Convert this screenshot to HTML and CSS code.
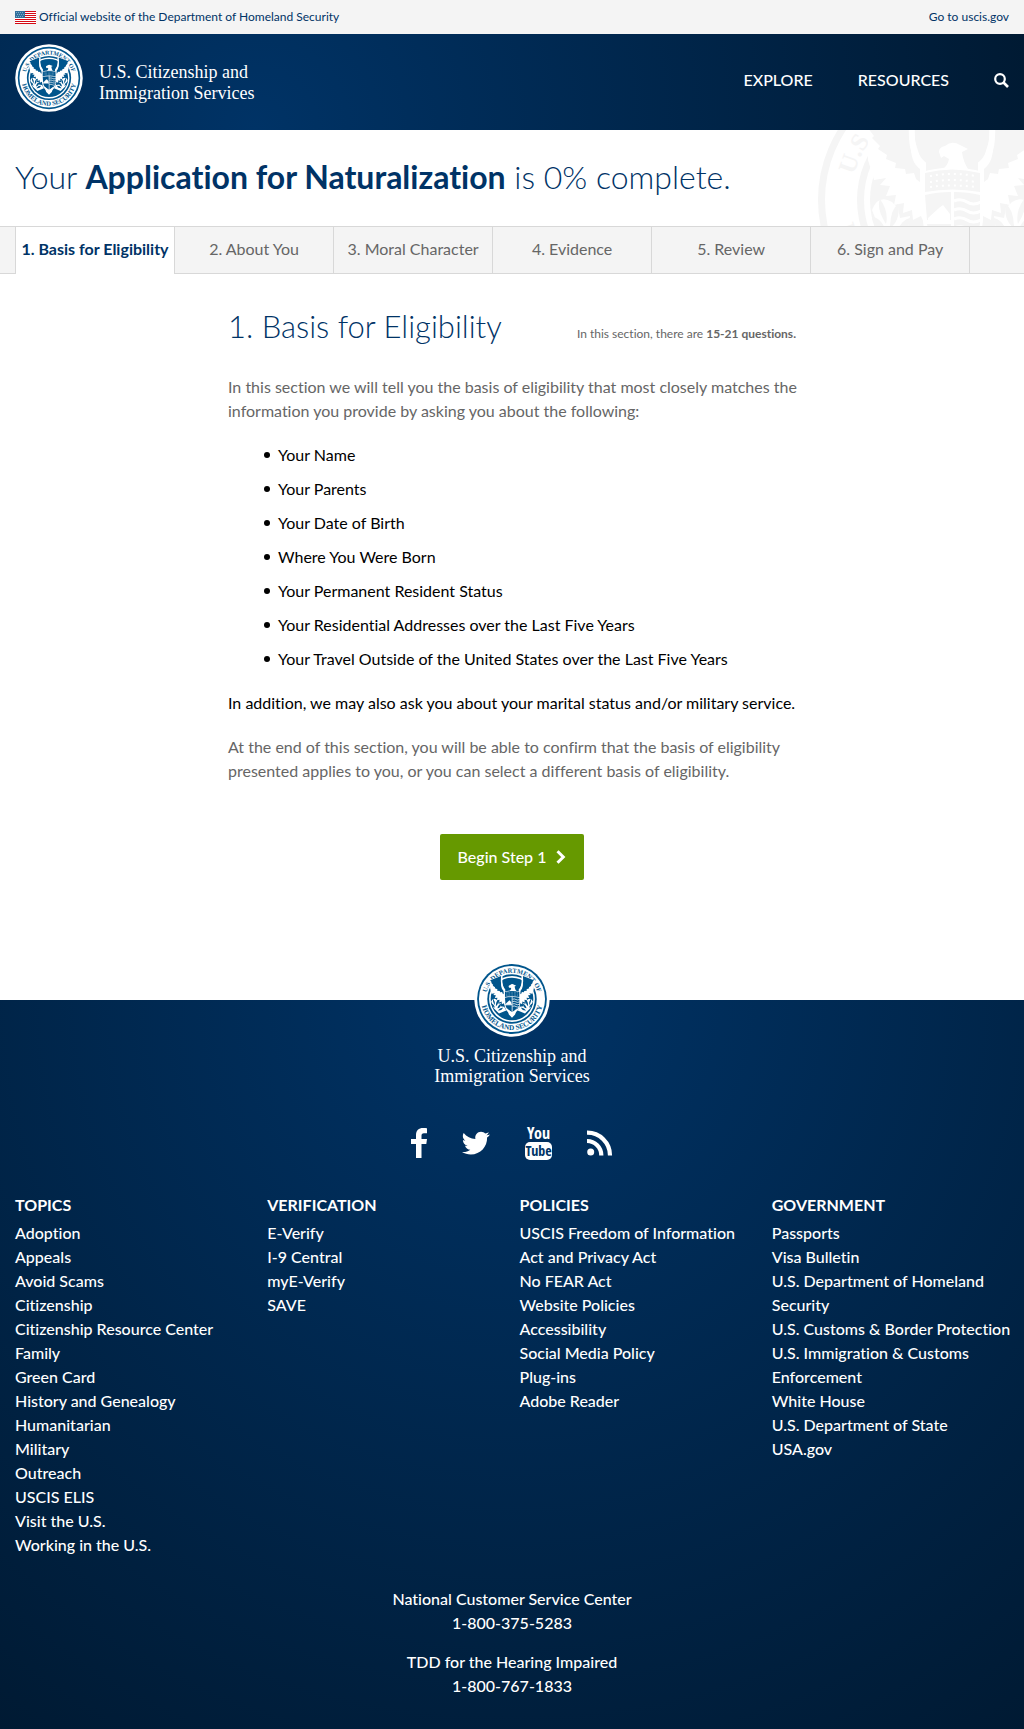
FILE: index.html
```html
<!DOCTYPE html>
<html lang="en">
<head>
<meta charset="utf-8">
<meta name="viewport" content="width=device-width, initial-scale=1">
<title>Application for Naturalization | USCIS</title>
<link rel="stylesheet" href="styles.css">
</head>
<body>
<svg class="sprite" aria-hidden="true">
  <symbol id="seal" viewBox="-146 -146 292 292">
    <circle r="145" class="paper"/>
    <circle r="134" class="ink"/>
    <circle r="127" class="paper"/>
    <path id="arc-top" d="M-101 0A101 101 0 0 1 101 0" fill="none"/>
    <path id="arc-bottom" d="M-119 0A119 119 0 0 0 119 0" fill="none"/>
    <text class="ink seal-text"><textPath href="#arc-top" startOffset="50%">U.S. DEPARTMENT OF</textPath></text>
    <text class="ink seal-text seal-text-low"><textPath href="#arc-bottom" startOffset="50%">HOMELAND SECURITY</textPath></text>
    <circle r="95" class="ink"/>
    <circle r="88" class="paper"/>
    <circle r="82" class="ink"/>
    <g id="wing">
      <path class="paper" d="M-28 -30L-46 -88L-84 -74L-84 -40L-78 -20L-66 -22L-72 -15L-62 -14L-66 -4L-56 -5L-58 5L-48 3L-49 13L-40 10L-39 20L-31 16L-26 28L-20 10Z"/>
      <path class="ink" d="M-42 -88L-84 -72L-78 -64L-80 -62L-72 -54L-74 -51L-65 -45L-66 -41L-56 -37L-57 -32L-47 -31L-46 -26L-38 -27L-36 -21L-32 -18L-32 -31C-44 -40 -41 -56 -42 -88Z"/>
      <path fill="none" class="paper-line" stroke-width="6" d="M-39 -88C-42 -60 -40 -45 -29 -36L-29 -28"/>
      <path class="paper" d="M-80 10Q-74 -6 -60 2L-54 8L-52 18L-42 16L-44 28L-30 30L-22 44L-50 56L-70 36Z"/>
      <path class="ink" d="M-66 24Q-76 8 -72 -1Q-63 12 -66 24ZM-62 28Q-62 10 -54 4Q-51 20 -62 28ZM-56 36Q-52 20 -42 18Q-43 34 -56 36ZM-66 34Q-80 26 -80 16Q-68 20 -66 34ZM-54 44Q-45 32 -34 34Q-40 46 -54 44Z"/>
    </g>
    <use href="#wing" transform="scale(-1 1)"/>
    <path class="paper" d="M-13 -48Q-13 -53 -7 -54Q0 -60 8 -55L16 -51L10 -48Q11 -39 16 -31L-9 -31Q-4 -35 -3 -41L-8 -44L-11 -42Z"/>
    <path class="paper" d="M-30 -28Q0 -37 31 -28L31 20Q29 48 0 59Q-28 48 -29 20Z"/>
    <path class="ink" d="M-27 -27Q0 -34 28 -27L28 -8Q0 -13 -27 -8Z"/>
    <path class="paper-line dots" fill="none" stroke-width="2" d="M-22 -24Q0 -28 24 -24M-22 -18Q0 -22 24 -18M-22 -13Q0 -16 24 -13"/>
    <path class="ink" d="M-27 -5Q-15 -8 -1 -8V20H-25Z"/>
    <path class="paper" d="M-24 18L-13 8L-9 5L-2 14V21H-24Z"/>
    <path class="ink" d="M2 -8Q16 -8 28 -5V24Q24 42 2 50ZM-25 24H-1V50Q-22 40 -25 24Z"/>
    <path class="paper-line" fill="none" stroke-width="3" d="M2 1Q9 -2 15 2T29 2M2 10Q9 7 15 11T29 11M2 19Q9 16 15 20T29 20M2 28Q9 25 15 29T28 29"/>
    <path class="paper" d="M-20 36L0 52L20 36L12 60L0 72L-12 60Z"/>
  </symbol>
</svg>

<div class="official">
  <div class="wrap official-row">
    <a class="official-link" href="#">
      <svg class="flag" viewBox="0 0 21 13" aria-hidden="true">
        <path fill="#fff" d="M0 0H21V13H0Z"/>
        <path fill="#d50a14" d="M0 0H21V1H0ZM0 2H21V3H0ZM0 4H21V5H0ZM0 6H21V7H0ZM0 8H21V9H0ZM0 10H21V11H0ZM0 12H21V13H0Z"/>
        <path fill="#31709c" d="M0 0H10V7H0Z"/>
        <path stroke="#7fa9c6" stroke-dasharray="1 1" d="M1 1.500H9M2 3.500H9M1 5.500H9"/>
      </svg>
      Official website of the Department of Homeland Security
    </a>
    <a href="#">Go to uscis.gov</a>
  </div>
</div>

<header class="masthead">
  <div class="wrap masthead-row">
    <a class="brand" href="#">
      <svg class="seal" aria-hidden="true"><use href="#seal"/></svg>
      <span>U.S. Citizenship and<br>Immigration Services</span>
    </a>
    <nav class="main-nav" aria-label="Main">
      <a href="#">EXPLORE</a>
      <a href="#">RESOURCES</a>
      <button class="search" type="button" aria-label="Search">
        <svg viewBox="0 0 15 15"><circle cx="6" cy="6" r="4.800" fill="none" stroke="currentColor" stroke-width="2.200"/><path d="M9.500 9.500L14 14" stroke="currentColor" stroke-width="2.600"/></svg>
      </button>
    </nav>
  </div>
</header>

<section class="progress">
  <svg class="watermark" aria-hidden="true"><use href="#seal"/></svg>
  <div class="wrap">
    <h1>Your <strong>Application for Naturalization</strong> is 0% complete.</h1>
  </div>
</section>

<nav class="steps" aria-label="Steps">
  <ol class="wrap">
    <li><a class="current" aria-current="step" href="#">1. Basis for Eligibility</a></li>
    <li><a href="#">2. About You</a></li>
    <li><a href="#">3. Moral Character</a></li>
    <li><a href="#">4. Evidence</a></li>
    <li><a href="#">5. Review</a></li>
    <li><a href="#">6. Sign and Pay</a></li>
  </ol>
</nav>

<main class="content">
  <div class="section-head">
    <h2>1. Basis for Eligibility</h2>
    <p>In this section, there are <strong>15-21 questions.</strong></p>
  </div>
  <p class="lead">In this section we will tell you the basis of eligibility that most closely matches the information you provide by asking you about the following:</p>
  <ul class="topics">
    <li>Your Name</li>
    <li>Your Parents</li>
    <li>Your Date of Birth</li>
    <li>Where You Were Born</li>
    <li>Your Permanent Resident Status</li>
    <li>Your Residential Addresses over the Last Five Years</li>
    <li>Your Travel Outside of the United States over the Last Five Years</li>
  </ul>
  <p class="strong-text">In addition, we may also ask you about your marital status and/or military service.</p>
  <p>At the end of this section, you will be able to confirm that the basis of eligibility presented applies to you, or you can select a different basis of eligibility.</p>
  <button class="begin" type="button">Begin Step 1
    <svg viewBox="0 0 10 14" aria-hidden="true"><path d="M1.500 1.200L7.300 7L1.500 12.800" fill="none" stroke="currentColor" stroke-width="3"/></svg>
  </button>
</main>

<footer class="footer">
  <div class="wrap">
    <a class="footer-brand" href="#">
      <svg class="seal" aria-hidden="true"><use href="#seal"/></svg>
      <span>U.S. Citizenship and<br>Immigration Services</span>
    </a>
    <div class="social">
      <a href="#" aria-label="Facebook"><svg width="16" height="30" viewBox="0 0 16 30"><path fill="currentColor" d="M16 .3V5.200H13C11 5.200 10.500 6.200 10.500 7.700V11H16L15.300 16H10.500V30H5V16H0V11H5V7C5 2.500 7.800 0 12 0C14 0 15.500 .2 16 .3Z"/></svg></a>
      <a href="#" aria-label="Twitter"><svg width="28" height="24" viewBox="0 0 28 24"><path fill="currentColor" d="M28 3.500C27.200 4.700 26.200 5.700 25.100 6.500C25.400 15.500 18.500 23.500 8.800 23.500C5.500 23.500 2.500 22.600 0 21C3.200 21.300 6 20.400 8.300 18.700C5.700 18.600 3.700 17 3 14.700C3.900 14.900 4.700 14.800 5.500 14.600C2.800 14 .9 11.700 .9 8.900C1.700 9.300 2.500 9.600 3.400 9.600C.9 7.900 .1 4.700 1.700 2C4.600 5.500 8.700 7.800 13.400 8C12.500 4.200 15.400 .8 19 .8C20.700 .8 22.200 1.500 23.200 2.600C24.500 2.300 25.700 1.900 26.700 1.200C26.300 2.500 25.400 3.700 24.300 4.300C25.600 4.200 26.800 3.900 28 3.500Z"/></svg></a>
      <a href="#" aria-label="YouTube" class="youtube"><span>You</span><span class="tube">Tube</span></a>
      <a href="#" aria-label="RSS"><svg width="26" height="26" viewBox="0 0 26 26"><circle cx="3.700" cy="22" r="3.500" fill="currentColor"/><g fill="none" stroke="currentColor" stroke-width="4.200"><path d="M0 11A14.300 14.300 0 0 1 14.300 25.500"/><path d="M0 2.700A22.700 22.700 0 0 1 23 25.500"/></g></svg></a>
    </div>
    <div class="link-columns">
      <nav aria-labelledby="f-topics">
        <h3 id="f-topics">TOPICS</h3>
        <ul>
          <li><a href="#">Adoption</a></li>
          <li><a href="#">Appeals</a></li>
          <li><a href="#">Avoid Scams</a></li>
          <li><a href="#">Citizenship</a></li>
          <li><a href="#">Citizenship Resource Center</a></li>
          <li><a href="#">Family</a></li>
          <li><a href="#">Green Card</a></li>
          <li><a href="#">History and Genealogy</a></li>
          <li><a href="#">Humanitarian</a></li>
          <li><a href="#">Military</a></li>
          <li><a href="#">Outreach</a></li>
          <li><a href="#">USCIS ELIS</a></li>
          <li><a href="#">Visit the U.S.</a></li>
          <li><a href="#">Working in the U.S.</a></li>
        </ul>
      </nav>
      <nav aria-labelledby="f-verification">
        <h3 id="f-verification">VERIFICATION</h3>
        <ul>
          <li><a href="#">E-Verify</a></li>
          <li><a href="#">I-9 Central</a></li>
          <li><a href="#">myE-Verify</a></li>
          <li><a href="#">SAVE</a></li>
        </ul>
      </nav>
      <nav aria-labelledby="f-policies">
        <h3 id="f-policies">POLICIES</h3>
        <ul>
          <li><a href="#">USCIS Freedom of Information Act and Privacy Act</a></li>
          <li><a href="#">No FEAR Act</a></li>
          <li><a href="#">Website Policies</a></li>
          <li><a href="#">Accessibility</a></li>
          <li><a href="#">Social Media Policy</a></li>
          <li><a href="#">Plug-ins</a></li>
          <li><a href="#">Adobe Reader</a></li>
        </ul>
      </nav>
      <nav aria-labelledby="f-government">
        <h3 id="f-government">GOVERNMENT</h3>
        <ul>
          <li><a href="#">Passports</a></li>
          <li><a href="#">Visa Bulletin</a></li>
          <li><a href="#">U.S. Department of Homeland Security</a></li>
          <li><a href="#">U.S. Customs &amp; Border Protection</a></li>
          <li><a href="#">U.S. Immigration &amp; Customs Enforcement</a></li>
          <li><a href="#">White House</a></li>
          <li><a href="#">U.S. Department of State</a></li>
          <li><a href="#">USA.gov</a></li>
        </ul>
      </nav>
    </div>
    <address class="contact">
      <p>National Customer Service Center<br>1-800-375-5283</p>
      <p>TDD for the Hearing Impaired<br>1-800-767-1833</p>
    </address>
  </div>
</footer>
</body>
</html>
```
FILE: styles.css
```css
:root {
  --navy: #003366;
  --grey: #666;
  --panel: #f4f4f4;
  --rule: #d8d8d8;
}

* { box-sizing: border-box; }

body {
  margin: 0;
  background: #fff;
  color: var(--grey);
  font-family: Lato, "Liberation Sans", sans-serif;
  font-size: 16px;
  font-variant-ligatures: none;
  line-height: 24px;
}

h1, h2, h3, p, ul, ol { margin: 0; }
a { color: inherit; text-decoration: none; }
button { font: inherit; border: 0; cursor: pointer; }

.wrap { padding: 0 15px; }

/* Seal artwork */
.sprite { position: absolute; width: 0; height: 0; }
.ink { fill: currentColor; }
.paper { fill: #fff; }
.paper-line { stroke: #fff; }
.dots { stroke-dasharray: 2 4; }
.seal-text {
  font-family: "Liberation Serif", serif;
  font-size: 25px;
  font-weight: 700;
  text-anchor: middle;
}
.seal-text-low { font-size: 28px; }
.seal { display: block; color: #00558c; }

/* Official strip */
.official {
  background: var(--panel);
  color: var(--navy);
  font-size: 12px;
}
.official-row {
  display: flex;
  justify-content: space-between;
  align-items: center;
  min-height: 34px;
}
.official-link { display: flex; align-items: center; gap: 3px; }
.flag { width: 21px; height: 13px; }

/* Masthead */
.masthead {
  background: radial-gradient(circle at 25% 100%, #003366, #001a33);
  color: #fff;
}
.masthead-row {
  display: flex;
  justify-content: space-between;
  align-items: flex-start;
  min-height: 96px;
  padding-top: 10px;
}
.brand {
  display: flex;
  align-items: center;
  gap: 16px;
  font: 500 18px/21px Georgia, "Liberation Serif", serif;
}
.brand span { padding-top: 9px; }
.brand .seal { width: 68px; height: 68px; }
.main-nav {
  display: flex;
  align-items: center;
  gap: 45px;
  padding-top: 24px;
  font-weight: 500;
}
.search { padding: 0; background: none; color: #fff; }
.search svg { display: block; width: 15px; height: 15px; }

/* Progress title */
.progress {
  position: relative;
  overflow: hidden;
  padding: 27px 0 29px;
  color: var(--navy);
}
.progress .wrap { position: relative; }
.progress h1 { font-size: 32px; font-weight: 300; line-height: 40px; }
.progress strong { font-weight: 700; }
.watermark {
  position: absolute;
  top: -76px;
  right: -74px;
  width: 292px;
  height: 292px;
  color: #f5f5f5;
}

/* Step tabs */
.steps {
  background: var(--panel);
  border: solid var(--rule);
  border-width: 1px 0;
}
.steps ol { display: flex; list-style: none; }
.steps li { width: 16%; border-right: 1px solid var(--rule); }
.steps li:first-child { width: calc(16% + 1px); border-left: 1px solid var(--rule); }
.steps a { display: block; padding: 10px 0 12px; text-align: center; white-space: nowrap; }
.steps .current {
  margin-bottom: -1px;
  padding-bottom: 13px;
  background: #fff;
  color: var(--navy);
  font-weight: 700;
}

/* Section */
.content {
  display: flex;
  flex-direction: column;
  gap: 20px;
  max-width: 568px;
  margin: 0 auto;
  padding: 34px 0 120px;
}
.section-head {
  display: flex;
  justify-content: space-between;
  align-items: baseline;
  margin-bottom: 9px;
}
.section-head h2 {
  color: var(--navy);
  font-size: 31px;
  font-weight: 300;
  line-height: 36px;
}
.section-head p { font-size: 12px; }
.lead { margin-right: -8px; }
.topics {
  display: flex;
  flex-direction: column;
  gap: 10px;
  padding-left: 36px;
  color: #000;
  list-style: none;
}
.topics li { display: flex; align-items: center; gap: 8px; }
.topics li::before {
  content: "";
  width: 6px;
  height: 6px;
  border-radius: 50%;
  background: currentColor;
}
.strong-text { color: #000; }
.begin {
  display: flex;
  align-items: center;
  align-self: center;
  gap: 10px;
  margin-top: 31px;
  padding: 11px 18px;
  border-radius: 2px;
  background: #669900;
  color: #fff;
  font-weight: 500;
}
.begin svg { width: 10px; height: 14px; }

/* Footer */
.footer {
  background: radial-gradient(circle at 50% 0, #003366, #001a33);
  color: #fff;
  font-weight: 500;
}
.footer-brand {
  display: flex;
  flex-direction: column;
  align-items: center;
  gap: 9px;
  text-align: center;
  font: 500 18px/20px Georgia, "Liberation Serif", serif;
}
.footer-brand .seal { width: 76px; height: 76px; margin-top: -39px; }
.social {
  display: flex;
  justify-content: center;
  align-items: center;
  gap: 35px;
  margin: 40px 0 33px;
}
.social a { display: block; }
.social svg { display: block; }
.social .youtube {
  width: 27px;
  font: 700 16px/15px "Open Sans Condensed", "Liberation Sans Narrow", "Liberation Sans", sans-serif;
  text-align: center;
}
.youtube span { display: block; }
.youtube .tube {
  margin-top: 1px;
  border-radius: 5px;
  background: #fff;
  color: var(--navy);
  font-size: 14px;
  line-height: 18px;
}
.link-columns {
  display: grid;
  grid-template-columns: repeat(4, 1fr);
  gap: 15px;
}
.link-columns h3 { margin-bottom: 4px; font-size: 16px; font-weight: 700; }
.link-columns ul { margin-right: -5px; padding: 0; list-style: none; }
.contact {
  display: grid;
  gap: 15px;
  padding: 30px 0 31px;
  font-style: normal;
  text-align: center;
}
```
